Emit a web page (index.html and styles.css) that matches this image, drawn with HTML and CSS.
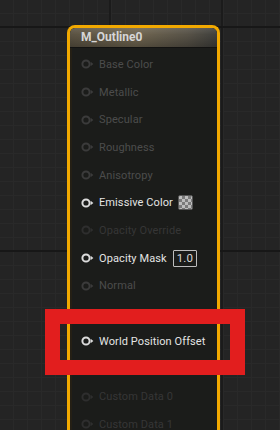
FILE: index.html
```html
<!DOCTYPE html>
<html>
<head>
<meta charset="utf-8">
<link rel="stylesheet" href="styles.css">
</head>
<body>
<div class="canvas">
  <div class="node">
    <div class="header">M_Outline0</div>
    <div class="pins">
      <div class="row dim"><svg class="pin" viewBox="0 0 13 10"><circle cx="5" cy="5" r="3.6"/><polygon points="9.6,2.8 12.4,5 9.6,7.2"/></svg><span>Base Color</span></div>
      <div class="row dim"><svg class="pin" viewBox="0 0 13 10"><circle cx="5" cy="5" r="3.6"/><polygon points="9.6,2.8 12.4,5 9.6,7.2"/></svg><span>Metallic</span></div>
      <div class="row dim"><svg class="pin" viewBox="0 0 13 10"><circle cx="5" cy="5" r="3.6"/><polygon points="9.6,2.8 12.4,5 9.6,7.2"/></svg><span>Specular</span></div>
      <div class="row dim"><svg class="pin" viewBox="0 0 13 10"><circle cx="5" cy="5" r="3.6"/><polygon points="9.6,2.8 12.4,5 9.6,7.2"/></svg><span>Roughness</span></div>
      <div class="row dim"><svg class="pin" viewBox="0 0 13 10"><circle cx="5" cy="5" r="3.6"/><polygon points="9.6,2.8 12.4,5 9.6,7.2"/></svg><span>Anisotropy</span></div>
      <div class="row on"><svg class="pin" viewBox="0 0 13 10"><circle cx="5" cy="5" r="3.6"/><polygon points="9.6,2.8 12.4,5 9.6,7.2"/></svg><span>Emissive Color</span><span class="swatch"></span></div>
      <div class="row off"><svg class="pin" viewBox="0 0 13 10"><circle cx="5" cy="5" r="3.6"/><polygon points="9.6,2.8 12.4,5 9.6,7.2"/></svg><span>Opacity Override</span></div>
      <div class="row on"><svg class="pin" viewBox="0 0 13 10"><circle cx="5" cy="5" r="3.6"/><polygon points="9.6,2.8 12.4,5 9.6,7.2"/></svg><span>Opacity Mask</span><span class="value">1.0</span></div>
      <div class="row dim"><svg class="pin" viewBox="0 0 13 10"><circle cx="5" cy="5" r="3.6"/><polygon points="9.6,2.8 12.4,5 9.6,7.2"/></svg><span>Normal</span></div>
      <div class="row"></div>
      <div class="row on"><svg class="pin" viewBox="0 0 13 10"><circle cx="5" cy="5" r="3.6"/><polygon points="9.6,2.8 12.4,5 9.6,7.2"/></svg><span>World Position Offset</span></div>
      <div class="row"></div>
      <div class="row off"><svg class="pin" viewBox="0 0 13 10"><circle cx="5" cy="5" r="3.6"/><polygon points="9.6,2.8 12.4,5 9.6,7.2"/></svg><span>Custom Data 0</span></div>
      <div class="row off"><svg class="pin" viewBox="0 0 13 10"><circle cx="5" cy="5" r="3.6"/><polygon points="9.6,2.8 12.4,5 9.6,7.2"/></svg><span>Custom Data 1</span></div>
    </div>
  </div>
  <div class="highlight"></div>
</div>
</body>
</html>
```
FILE: styles.css
```css
html, body {
  margin: 0;
  padding: 0;
}
body {
  width: 280px;
  height: 430px;
  overflow: hidden;
  background-color: #242424;
  background-image:
    linear-gradient(to bottom, transparent 26px, #171717 26px, #171717 28px, transparent 28px),
    linear-gradient(to right, transparent 109px, #1b1b1b 109px, #1b1b1b 111px, transparent 111px),
    linear-gradient(to bottom, transparent 13px, #292929 13px, #292929 14px, transparent 14px),
    linear-gradient(to right, transparent 13px, #292929 13px, #292929 14px, transparent 14px);
  background-size: 100% 224px, 112px 100%, 100% 14px, 14px 100%;
  background-position: 0 0, 0 0, 0 0, 0 0;
  font-family: Roboto, "Liberation Sans", sans-serif;
}
.canvas {
  position: relative;
  width: 280px;
  height: 430px;
  padding-top: 25px;
  box-sizing: border-box;
}
.node {
  margin-left: 67px;
  width: 153px;
  height: 420px;
  box-sizing: border-box;
  border: 3px solid #f2a900;
  border-bottom: none;
  border-radius: 8px 8px 0 0;
  background: #1b1c1a;
  overflow: hidden;
}
.header {
  height: 19px;
  line-height: 18px;
  padding-left: 11px;
  font-size: 12px;
  font-weight: 700;
  color: #d6d6d6;
  border-radius: 5px 5px 0 0;
  background:
    linear-gradient(to bottom, rgba(255,255,255,0.10), rgba(0,0,0,0) 35%, rgba(0,0,0,0.25)),
    linear-gradient(to right, #5a5242 0%, #6f6550 45%, #575247 80%, #3f3f3c 100%);
  border-bottom: 1px solid #121211;
}
.pins {
  display: flex;
  flex-direction: column;
  border-left: 2px solid #241f15;
  padding-top: 2.5px;
}
.row {
  height: 27.7px;
  flex: none;
  display: flex;
  align-items: center;
  padding-left: 9px;
  font-size: 11px;
  letter-spacing: 0.1px;
  white-space: nowrap;
}
.pin {
  width: 13px;
  height: 10px;
  margin-right: 5px;
  flex: none;
}
.pin circle {
  fill: none;
  stroke-width: 2;
}
.dim { color: #4c4c4c; }
.dim .pin circle { stroke: #3b3b3b; }
.dim .pin polygon { fill: #3b3b3b; }
.off { color: #363636; }
.off .pin circle { stroke: #2e2e2e; }
.off .pin polygon { fill: #2e2e2e; }
.on { color: #e4e4e4; }
.on .pin circle { stroke: #dcdcdc; }
.on .pin polygon { fill: #dcdcdc; }
.swatch {
  width: 13px;
  height: 13px;
  margin-left: 5px;
  border: 1px solid #555;
  background-color: #bdbdbd;
  background-image:
    linear-gradient(45deg, #7b7b7b 25%, transparent 25%, transparent 75%, #7b7b7b 75%),
    linear-gradient(45deg, #7b7b7b 25%, transparent 25%, transparent 75%, #7b7b7b 75%);
  background-size: 6px 6px;
  background-position: 0 0, 3px 3px;
  border-radius: 2px;
}
.value {
  margin-left: 6px;
  height: 15px;
  line-height: 15px;
  padding: 0 3px;
  border: 1px solid #bdbdbd;
  border-radius: 1px;
  font-size: 11.5px;
  color: #d8d8d8;
}
.highlight {
  position: absolute;
  left: 45px;
  top: 309px;
  width: 200px;
  height: 66px;
  box-sizing: border-box;
  border: 15px solid #e21e1e;
}
```
